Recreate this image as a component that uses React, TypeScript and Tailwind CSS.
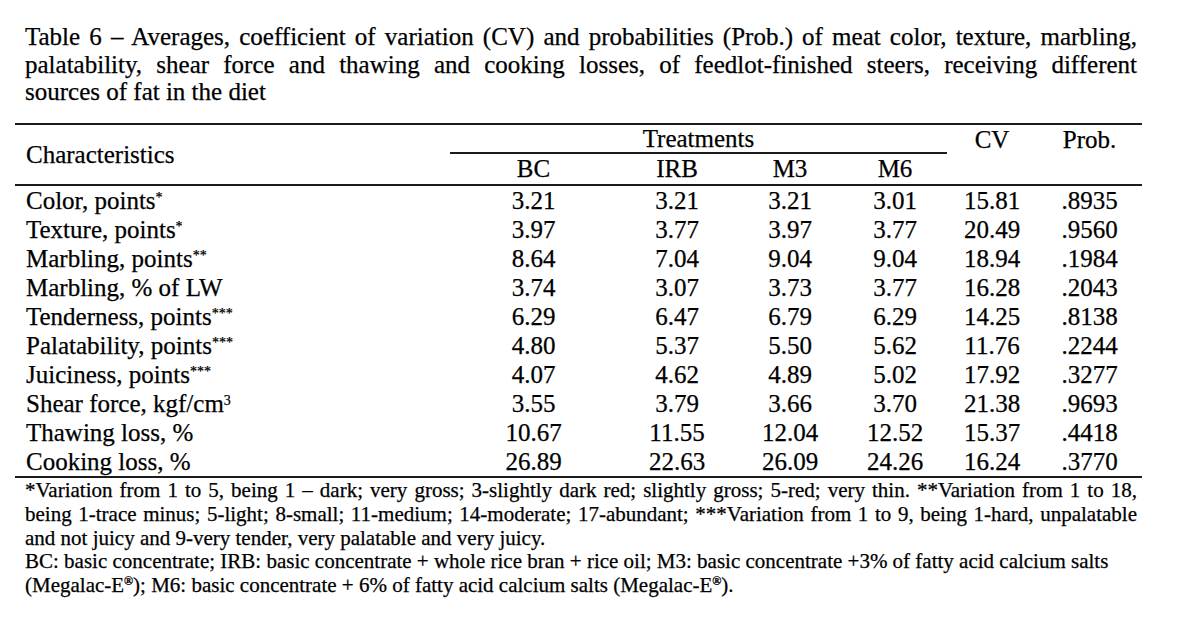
import React from "react";

const rows: { name: string; sup?: string; values: string[] }[] = [
  { name: "Color, points", sup: "*", values: ["3.21", "3.21", "3.21", "3.01", "15.81", ".8935"] },
  { name: "Texture, points", sup: "*", values: ["3.97", "3.77", "3.97", "3.77", "20.49", ".9560"] },
  { name: "Marbling, points", sup: "**", values: ["8.64", "7.04", "9.04", "9.04", "18.94", ".1984"] },
  { name: "Marbling, % of LW", values: ["3.74", "3.07", "3.73", "3.77", "16.28", ".2043"] },
  { name: "Tenderness, points", sup: "***", values: ["6.29", "6.47", "6.79", "6.29", "14.25", ".8138"] },
  { name: "Palatability, points", sup: "***", values: ["4.80", "5.37", "5.50", "5.62", "11.76", ".2244"] },
  { name: "Juiciness, points", sup: "***", values: ["4.07", "4.62", "4.89", "5.02", "17.92", ".3277"] },
  { name: "Shear force, kgf/cm", sup: "3", values: ["3.55", "3.79", "3.66", "3.70", "21.38", ".9693"] },
  { name: "Thawing loss, %", values: ["10.67", "11.55", "12.04", "12.52", "15.37", ".4418"] },
  { name: "Cooking loss, %", values: ["26.89", "22.63", "26.09", "24.26", "16.24", ".3770"] },
];

// value column widths: BC, IRB, M3, M6, CV, Prob.
const valueCols = ["w-[167px]", "w-[120px]", "w-[106px]", "w-[104px]", "w-[90px]", "w-[105px]"];

function JustLine({ children }: { children: React.ReactNode }) {
  return <div className="whitespace-nowrap text-justify [text-align-last:justify]">{children}</div>;
}

function Sup({ children }: { children: React.ReactNode }) {
  return <sup className="relative -top-[7px] align-baseline text-[14px]">{children}</sup>;
}

export default function App() {
  return (
    <div className="min-h-[629px] w-[1200px] bg-white text-black font-['Liberation_Serif','Times_New_Roman',serif] [-webkit-text-stroke:0.25px_black]">
      {/* Title */}
      <div className="pl-[25px] pt-[23px] w-[1137px] text-[25px] leading-[27.5px]">
        <JustLine>
          Table 6 – Averages, coefficient of variation (CV) and probabilities (Prob.) of meat color, texture, marbling,
        </JustLine>
        <JustLine>
          palatability, shear force and thawing and cooking losses, of feedlot-finished steers, receiving different
        </JustLine>
        <div className="whitespace-nowrap">sources of fat in the diet</div>
      </div>

      {/* Table */}
      <div className="ml-[15px] mt-[17px] w-[1127px] text-[25px] leading-none border-t-2 border-b-2 border-[#1c1c1c]">
        {/* Header */}
        <div className="flex border-b-2 border-[#1c1c1c]">
          <div className="w-[435px] h-[59px] flex items-center pl-[11px]">Characteristics</div>
          <div className="w-[497px] flex flex-col">
            <div className="h-[29px] flex items-center justify-center border-b-2 border-[#1c1c1c]">Treatments</div>
            <div className="h-[30px] flex items-center">
              <div className="w-[167px] text-center">BC</div>
              <div className="w-[120px] text-center">IRB</div>
              <div className="w-[106px] text-center">M3</div>
              <div className="w-[104px] text-center">M6</div>
            </div>
          </div>
          <div className="w-[90px] h-[29px] flex items-center justify-center">CV</div>
          <div className="w-[105px] h-[29px] flex items-center justify-center">Prob.</div>
        </div>

        {/* Body */}
        {rows.map((r) => (
          <div key={r.name} className="flex h-[29.1px] items-center">
            <div className="w-[435px] pl-[11px] whitespace-nowrap">
              {r.name}
              {r.sup && <Sup>{r.sup}</Sup>}
            </div>
            {r.values.map((v, i) => (
              <div key={i} className={`${valueCols[i]} text-center`}>
                {v}
              </div>
            ))}
          </div>
        ))}
      </div>

      {/* Footnotes */}
      <div className="pl-[25px] mt-[1px] w-[1137px] text-[21px] leading-[23.6px]">
        <JustLine>
          *Variation from 1 to 5, being 1 – dark; very gross; 3-slightly dark red; slightly gross; 5-red; very thin. **Variation from 1 to 18,
        </JustLine>
        <JustLine>
          being 1-trace minus; 5-light; 8-small; 11-medium; 14-moderate; 17-abundant; ***Variation from 1 to 9, being 1-hard, unpalatable
        </JustLine>
        <div className="whitespace-nowrap">and not juicy and 9-very tender, very palatable and very juicy.</div>
        <div className="whitespace-nowrap">
          BC: basic concentrate; IRB: basic concentrate + whole rice bran + rice oil; M3: basic concentrate +3% of fatty acid calcium salts
        </div>
        <div className="whitespace-nowrap">
          (Megalac-E<sup className="relative -top-[7px] align-baseline text-[12px] font-bold">®</sup>); M6: basic concentrate + 6% of
          fatty acid calcium salts (Megalac-E<sup className="relative -top-[7px] align-baseline text-[12px] font-bold">®</sup>).
        </div>
      </div>
    </div>
  );
}
